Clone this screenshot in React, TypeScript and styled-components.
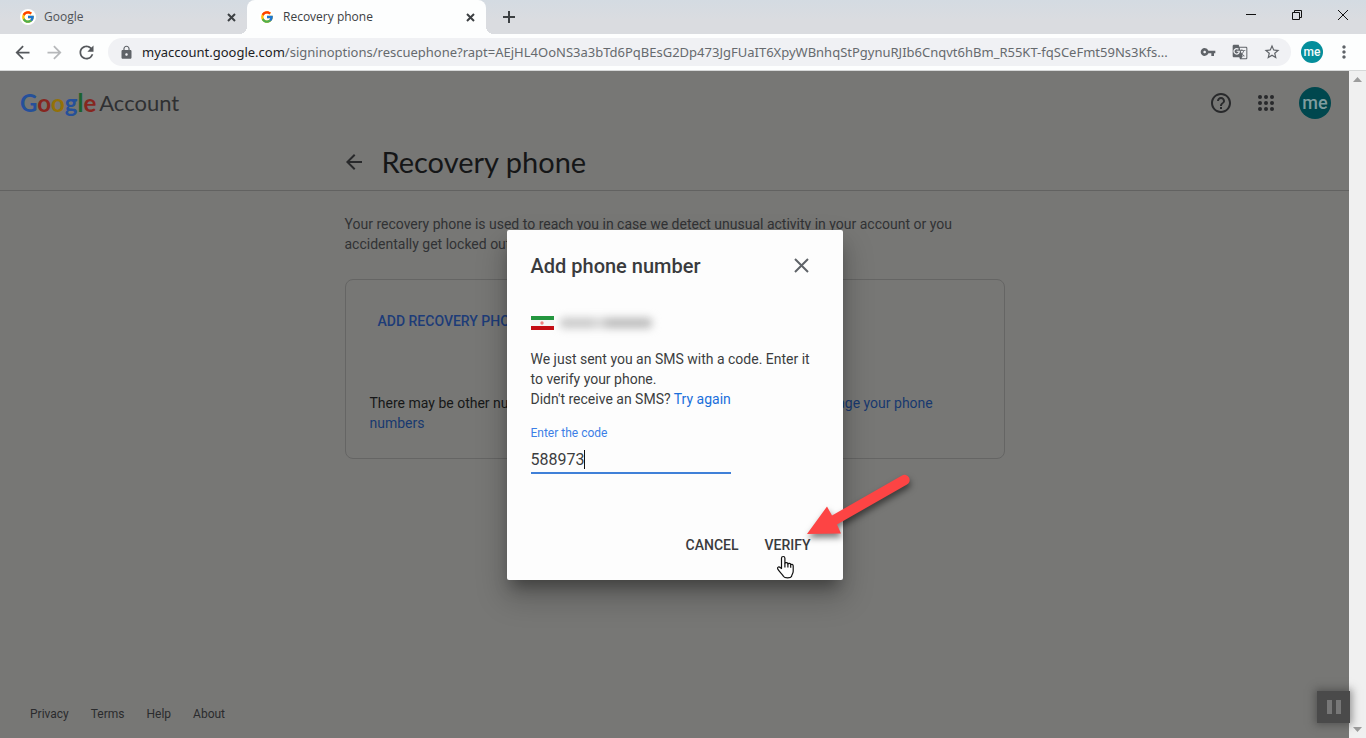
import React, { useState } from "react";
import styled, { createGlobalStyle } from "styled-components";
import { FcGoogle } from "react-icons/fc";
import {
  MdArrowBack,
  MdArrowForward,
  MdRefresh,
  MdLock,
  MdVpnKey,
  MdGTranslate,
  MdStarBorder,
  MdMoreVert,
  MdHelpOutline,
} from "react-icons/md";

const uiFont = `"Open Sans", "Noto Sans", sans-serif`;
const urlFont = `"Noto Sans", "Open Sans", sans-serif`;
const textFont = `Roboto, "Liberation Sans", sans-serif`;
const brandFont = `Lato, Roboto, sans-serif`;

const GlobalStyle = createGlobalStyle`
  *, *::before, *::after { box-sizing: border-box; }
  body { margin: 0; overflow: hidden; font-family: ${textFont}; }
  button { border: 0; padding: 0; margin: 0; background: none; font-family: inherit; color: inherit; cursor: pointer; }
  a { text-decoration: none; }
  svg { display: block; flex: none; }
`;

const Window = styled.div`
  height: 100vh;
  display: flex;
  flex-direction: column;
`;

/* Browser frame */

const TabStrip = styled.div`
  display: flex;
  height: 34px;
  flex: none;
  padding-left: 8px;
  background: linear-gradient(#d4dbe2, #dadce0 60%);
`;

const Tab = styled.div<{ $active?: boolean }>`
  position: relative;
  display: flex;
  align-items: center;
  width: 239px;
  padding: 0 8px 0 12px;
  border-radius: 8px 8px 0 0;
  background: ${(p) => (p.$active ? "#fdfefe" : "transparent")};
  color: ${(p) => (p.$active ? "#3c4043" : "#505357")};
  font: 12px/16px ${uiFont};

  &::before,
  &::after {
    content: ${(p) => (p.$active ? '""' : "none")};
    position: absolute;
    bottom: 0;
    width: 8px;
    height: 8px;
  }
  &::before {
    right: 100%;
    background: radial-gradient(circle at 0 0, transparent 8px, #fdfefe 8px);
  }
  &::after {
    left: 100%;
    background: radial-gradient(circle at 100% 0, transparent 8px, #fdfefe 8px);
  }
`;

const Favicon = styled.span`
  display: flex;
  padding: 1px;
  margin-right: 8px;
  border-radius: 50%;
  background: #fff;
`;

const TabTitle = styled.span`
  flex: 1;
`;

const FrameButton = styled.button<{ $width: number; $color?: string }>`
  display: flex;
  align-items: center;
  justify-content: center;
  flex: none;
  width: ${(p) => p.$width}px;
  color: ${(p) => p.$color ?? "#3c4043"};
`;

const WindowControls = styled.div`
  display: flex;
  margin-left: auto;
  height: 29px;
`;

const NewTab = styled(FrameButton)`
  margin-left: 8px;
`;

const Toolbar = styled.div`
  display: flex;
  align-items: center;
  flex: none;
  height: 37px;
  padding: 0 1px 0 6px;
  background: #fdfefe;
  border-bottom: 1px solid #d6d8d8;
`;

const AddressBar = styled.div`
  display: flex;
  align-items: center;
  flex: 1;
  min-width: 0;
  height: 28px;
  margin: 0 10px 0 6px;
  padding: 0 3px 0 11px;
  border-radius: 14px;
  background: #f0f1f4;
  color: #5f6368;
`;

const Url = styled.div`
  flex: 1;
  min-width: 0;
  margin: 0 4px 0 8px;
  overflow: hidden;
  white-space: nowrap;
  font: 13px/20px ${urlFont};
  color: #666a6e;

  b {
    font-weight: 400;
    color: #202124;
  }
`;

const Avatar = styled.button<{ $size: number; $dim?: boolean }>`
  display: flex;
  align-items: center;
  justify-content: center;
  flex: none;
  width: ${(p) => p.$size}px;
  height: ${(p) => p.$size}px;
  border-radius: 50%;
  background: ${(p) => (p.$dim ? "#00474e" : "#048e9b")};
  color: ${(p) => (p.$dim ? "#7f9c9f" : "#f4fbfb")};
  font: 500 ${(p) => (p.$dim ? 18 : 12)}px/20px ${textFont};
`;

/* Account page, shown under a dark scrim */

const Viewport = styled.div`
  display: flex;
  flex: 1;
  min-height: 0;
`;

const Page = styled.div`
  position: relative;
  display: flex;
  flex-direction: column;
  flex: 1;
  min-width: 0;
  background: #777775;
  color: #2b2c2e;
`;

const Header = styled.header`
  display: flex;
  align-items: center;
  height: 64px;
  padding: 0 18px 0 20px;
`;

const Brand = styled.a`
  display: flex;
  gap: 3px;
  margin-right: auto;
  font: 22px/28px ${brandFont};
  color: #2f3032;
`;

const Wordmark = styled.span`
  font-size: 24px;
  font-weight: 700;
`;

const Letter = styled.span<{ $color: string }>`
  color: ${(p) => p.$color};
`;

const HeaderActions = styled.div`
  display: flex;
  align-items: center;
  gap: 21px;
  color: #28292b;
`;

const TitleBar = styled.div`
  height: 56px;
  border-bottom: 1px solid #626261;
`;

const Column = styled.div`
  width: 660px;
  max-width: 100%;
  margin: 0 auto;
`;

const TitleRow = styled(Column)`
  display: flex;
  align-items: center;
  height: 54px;
  gap: 16px;
  color: #28292b;

  button {
    display: flex;
    margin-left: -3px;
  }
`;

const Title = styled.h1`
  margin: 0;
  font: 29px/36px ${brandFont};
  color: #151617;
`;

const Main = styled(Column)`
  padding-top: 23px;
  font: 14px/20px ${textFont};
`;

const Intro = styled.p`
  margin: 0;
  color: #313234;
`;

const Card = styled.section`
  margin-top: 25px;
  height: 180px;
  padding: 24px;
  border: 1px solid #656564;
  border-radius: 8px;
`;

const AddButton = styled.button`
  height: 34px;
  padding: 0 8px;
  font: 500 14px/20px ${textFont};
  color: #1d3c78;
`;

const CardNote = styled.p`
  margin: 55px 0 0;
  color: #161718;
`;

const DimLink = styled.a`
  color: #17396f;
`;

const Footer = styled.footer`
  display: flex;
  gap: 22px;
  margin-top: auto;
  padding: 0 30px 16px;
  font: 12px/16px ${textFont};

  a {
    color: #2a2b2d;
  }
`;

const ScrollTrack = styled.div`
  display: flex;
  flex-direction: column;
  justify-content: space-between;
  align-items: center;
  width: 17px;
  flex: none;
  padding: 6px 0;
  background: #f0f0f0;
  color: #9c9c9c;
`;

const PauseButton = styled.button`
  position: absolute;
  right: -1px;
  bottom: 15px;
  display: flex;
  align-items: center;
  justify-content: center;
  gap: 4px;
  width: 33px;
  height: 32px;
  background: #4a4a4a;
  box-shadow: 0 0 8px 2px rgba(50, 50, 50, 0.5);

  span {
    width: 5px;
    height: 14px;
    background: #777;
  }
`;

/* Dialog */

const Overlay = styled.div`
  position: absolute;
  inset: 0;
  display: flex;
  align-items: center;
  justify-content: center;
`;

const Dialog = styled.form`
  position: relative;
  display: flex;
  flex-direction: column;
  width: 336px;
  min-height: 350px;
  padding: 24px;
  border-radius: 2px;
  background: #fdfdfd;
  color: #3c3d3f;
  font: 14px/20px ${textFont};
  box-shadow: 0 11px 15px -5px rgba(0, 0, 0, 0.35), 0 16px 30px 3px rgba(0, 0, 0, 0.2);
`;

const DialogHead = styled.div`
  display: flex;
  align-items: center;
  justify-content: space-between;
  height: 24px;
  padding-right: 10px;
  color: #5f6368;
`;

const DialogTitle = styled.h2`
  margin: 0;
  font: 500 20px/24px ${textFont};
  color: #3a3b3d;
`;

const PhoneRow = styled.div`
  display: flex;
  align-items: center;
  gap: 6px;
  height: 20px;
  margin-top: 35px;
`;

const HiddenNumber = styled.span`
  width: 92px;
  height: 10px;
  border-radius: 4px;
  background: linear-gradient(90deg, #c6c6c6 0 34%, #d8d8d8 40% 44%, #b8b8b8 52% 100%);
  filter: blur(4px);
`;

const Message = styled.p`
  margin: 16px 0 0;

  a {
    color: #1a6fdb;
  }
`;

const FieldLabel = styled.label`
  margin-top: 16px;
  font: 12px/16px ${textFont};
  color: #3c7fe6;
`;

const Field = styled.div`
  display: flex;
  align-items: center;
  width: 200px;
  height: 33px;
  padding-top: 7px;
  border-bottom: 2px solid #4080d8;
`;

const CodeInput = styled.input`
  field-sizing: content;
  min-width: 0;
  padding: 0;
  border: 0;
  outline: 0;
  background: none;
  color: #3c3d3f;
  font: 16px/20px ${textFont};
`;

const Caret = styled.span`
  width: 1px;
  height: 19px;
  background: #111;
`;

const Actions = styled.div`
  display: flex;
  justify-content: flex-end;
  gap: 10px;
  margin-top: auto;
  margin-bottom: -7px;
`;

const ActionButton = styled.button`
  height: 36px;
  padding: 0 8px;
  font: 500 14px/20px ${textFont};
  color: #3a3b3d;
`;

const PointerArrow = styled.svg`
  position: absolute;
  left: 294px;
  top: 238px;
  pointer-events: none;
  filter: drop-shadow(1px 4px 3px rgba(0, 0, 0, 0.5));
`;

const HandCursor = styled.svg`
  position: absolute;
  left: 269px;
  top: 325px;
  pointer-events: none;
`;

const CrossIcon = ({ size, stroke }: { size: number; stroke: number }) => (
  <svg width={size} height={size} viewBox={`0 0 ${size} ${size}`}>
    <path d={`M1 1L${size - 1} ${size - 1}M${size - 1} 1L1 ${size - 1}`} stroke="currentColor" strokeWidth={stroke} />
  </svg>
);

const FlagIcon = () => (
  <svg width="23" height="14" viewBox="0 0 23 14">
    <rect width="23" height="14" fill="#f6f6f6" />
    <rect width="23" height="4" fill="#24963f" />
    <rect y="10" width="23" height="4" fill="#c40d14" />
    <circle cx="11" cy="7" r="1.700" fill="#ee8080" />
  </svg>
);

const AppsIcon = () => (
  <svg width="24" height="24" viewBox="0 0 24 24" fill="currentColor">
    {[6, 12, 18].map((y) => [6, 12, 18].map((x) => <circle key={`${x}-${y}`} cx={x} cy={y} r="2" />))}
  </svg>
);

const wordmark: [string, string][] = [
  ["G", "#25509a"],
  ["o", "#86261f"],
  ["o", "#947108"],
  ["g", "#25509a"],
  ["l", "#1c632d"],
  ["e", "#86261f"],
];

export default function App() {
  const [code, setCode] = useState("588973");

  return (
    <Window>
      <GlobalStyle />
      <TabStrip>
        <Tab>
          <Favicon>
            <FcGoogle size={14} />
          </Favicon>
          <TabTitle>Google</TabTitle>
          <FrameButton $width={15} aria-label="Close tab">
            <CrossIcon size={9} stroke={2} />
          </FrameButton>
        </Tab>
        <Tab $active>
          <Favicon>
            <FcGoogle size={14} />
          </Favicon>
          <TabTitle>Recovery phone</TabTitle>
          <FrameButton $width={15} aria-label="Close tab">
            <CrossIcon size={9} stroke={2} />
          </FrameButton>
        </Tab>
        <NewTab $width={30} aria-label="New tab">
          <svg width="12" height="12" viewBox="0 0 12 12">
            <path d="M6 0V12M0 6H12" stroke="currentColor" strokeWidth="2" />
          </svg>
        </NewTab>
        <WindowControls>
          <FrameButton $width={46} $color="#111" aria-label="Minimize">
            <svg width="10" height="1" viewBox="0 0 10 1">
              <rect width="10" height="1" fill="currentColor" />
            </svg>
          </FrameButton>
          <FrameButton $width={46} $color="#111" aria-label="Restore">
            <svg width="10" height="10" viewBox="0 0 10 10" fill="none" stroke="currentColor">
              <path d="M.5 2.500h7v7h-7zM2.500 2.500v-2h7v7h-2" />
            </svg>
          </FrameButton>
          <FrameButton $width={46} $color="#111" aria-label="Close window">
            <CrossIcon size={12} stroke={1} />
          </FrameButton>
        </WindowControls>
      </TabStrip>

      <Toolbar>
        <FrameButton $width={32} $color="#55585c" aria-label="Back">
          <MdArrowBack size={21} />
        </FrameButton>
        <FrameButton $width={32} $color="#b6b8ba" aria-label="Forward">
          <MdArrowForward size={21} />
        </FrameButton>
        <FrameButton $width={32} $color="#55585c" aria-label="Reload">
          <MdRefresh size={21} />
        </FrameButton>
        <AddressBar>
          <MdLock size={15} />
          <Url>
            <b>myaccount.google.com</b>
            /signinoptions/rescuephone?rapt=AEjHL4OoNS3a3bTd6PqBEsG2Dp473JgFUaIT6XpyWBnhqStPgynuRJIb6Cnqvt6hBm_R55KT-fqSCeFmt59Ns3Kfs...
          </Url>
          <FrameButton $width={32} $color="#5f6368" aria-label="Saved passwords">
            <MdVpnKey size={16} />
          </FrameButton>
          <FrameButton $width={32} $color="#5f6368" aria-label="Translate this page">
            <MdGTranslate size={16} />
          </FrameButton>
          <FrameButton $width={32} $color="#5f6368" aria-label="Bookmark this page">
            <MdStarBorder size={18} />
          </FrameButton>
        </AddressBar>
        <Avatar $size={22} aria-label="Profile">
          me
        </Avatar>
        <FrameButton $width={42} $color="#5f6368" aria-label="Browser menu">
          <MdMoreVert size={20} />
        </FrameButton>
      </Toolbar>

      <Viewport>
        <Page>
          <Header>
            <Brand href="#" aria-label="Google Account">
              <Wordmark>
                {wordmark.map(([letter, color], i) => (
                  <Letter key={i} $color={color}>
                    {letter}
                  </Letter>
                ))}
              </Wordmark>
              Account
            </Brand>
            <HeaderActions>
              <button aria-label="Help">
                <MdHelpOutline size={24} />
              </button>
              <button aria-label="Google apps">
                <AppsIcon />
              </button>
              <Avatar $size={32} $dim aria-label="Account">
                me
              </Avatar>
            </HeaderActions>
          </Header>
          <TitleBar>
            <TitleRow>
              <button aria-label="Go back">
                <MdArrowBack size={24} />
              </button>
              <Title>Recovery phone</Title>
            </TitleRow>
          </TitleBar>
          <Main as="main">
            <Intro>
              Your recovery phone is used to reach you in case we detect unusual activity in your account or you
              accidentally get locked out.
            </Intro>
            <Card>
              <AddButton>ADD RECOVERY PHONE</AddButton>
              <CardNote>
                There may be other numbers that are linked with your Google Account. <DimLink href="#">Manage your phone numbers</DimLink>
              </CardNote>
            </Card>
          </Main>
          <Footer>
            <a href="#">Privacy</a>
            <a href="#">Terms</a>
            <a href="#">Help</a>
            <a href="#">About</a>
          </Footer>

          <Overlay>
            <Dialog role="dialog" aria-labelledby="dialog-title" onSubmit={(e) => e.preventDefault()}>
              <DialogHead>
                <DialogTitle id="dialog-title">Add phone number</DialogTitle>
                <button type="button" aria-label="Close">
                  <CrossIcon size={15} stroke={2} />
                </button>
              </DialogHead>
              <PhoneRow>
                <FlagIcon />
                <HiddenNumber />
              </PhoneRow>
              <Message>
                We just sent you an SMS with a code. Enter it to verify your phone.
                <br />
                Didn't receive an SMS? <a href="#">Try again</a>
              </Message>
              <FieldLabel htmlFor="code">Enter the code</FieldLabel>
              <Field>
                <CodeInput id="code" value={code} onChange={(e) => setCode(e.target.value)} />
                <Caret />
              </Field>
              <Actions>
                <ActionButton type="button">CANCEL</ActionButton>
                <ActionButton type="submit">VERIFY</ActionButton>
              </Actions>
              <PointerArrow width="120" height="76" viewBox="0 0 120 76">
                <path
                  d="M6 66L26 38.500L31 47.500L101 7.500A5 5 0 0 1 106 16.500L36 56.500L40 65.500Z"
                  fill="#fd4444"
                />
              </PointerArrow>
              <HandCursor width="20" height="26" viewBox="0 0 20 26">
                <path
                  d="M5.500 13.500V3.200a1.700 1.700 0 0 1 3.400 0V8.500c.2-1.300 2.900-1.200 3 .5.400-1 2.700-.8 2.800.7.500-.7 2.400-.4 2.500 1v5.500c0 2.300-1.300 3.300-1.700 5.300-.8 1.700-6.900 1.700-7.900 0C6.500 19 2.800 16.500 1.600 13.800c-.5-2 1.600-2.400 2.600-1.300z"
                  fill="#fff"
                  stroke="#111"
                  strokeWidth="1.200"
                  strokeLinejoin="round"
                />
                <path d="M8.900 8.500v4M11.900 9v3.500M14.700 9.700v3" fill="none" stroke="#111" strokeWidth="1.200" />
              </HandCursor>
            </Dialog>
          </Overlay>
          <PauseButton aria-label="Pause">
            <span />
            <span />
          </PauseButton>
        </Page>
        <ScrollTrack>
          <svg width="9" height="5" viewBox="0 0 9 5" fill="currentColor">
            <path d="M0 5L4.500 0L9 5z" />
          </svg>
          <svg width="9" height="5" viewBox="0 0 9 5" fill="currentColor">
            <path d="M0 0L4.500 5L9 0z" />
          </svg>
        </ScrollTrack>
      </Viewport>
    </Window>
  );
}
